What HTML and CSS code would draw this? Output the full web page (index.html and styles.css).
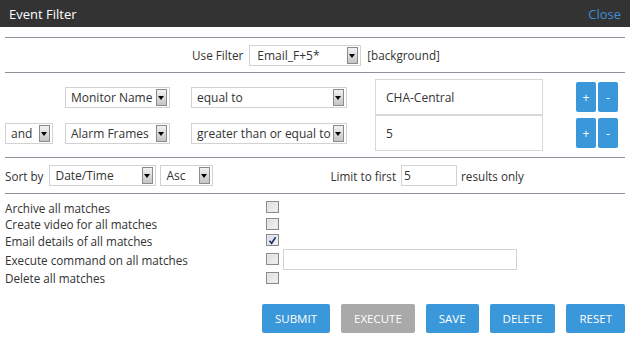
FILE: index.html
```html
<!DOCTYPE html>
<html lang="en">
<head>
    <meta charset="UTF-8">
    <title>Event Filter</title>
    <link rel="stylesheet" href="styles.css">
</head>
<body>
    <div class="dialog">
        <!-- Title bar -->
        <div class="titlebar">
            <span class="title">Event Filter</span>
            <a class="close" href="#">Close</a>
        </div>

        <div class="content">
            <!-- Filter choice -->
            <div class="filter-row">
                <span>Use Filter</span>
                <div class="select w-filter"><span>Email_F+5*</span><i class="arrow"></i></div>
                <span>[background]</span>
            </div>

            <!-- Terms -->
            <div class="terms">
                <div class="term">
                    <div></div>
                    <div class="select w-attr"><span>Monitor Name</span><i class="arrow"></i></div>
                    <div class="select w-op"><span>equal to</span><i class="arrow"></i></div>
                    <div class="value">CHA-Central</div>
                    <div class="term-btns"><button class="small">+</button><button class="small">-</button></div>
                </div>
                <div class="term">
                    <div class="select w-conj"><span>and</span><i class="arrow"></i></div>
                    <div class="select w-attr"><span>Alarm Frames</span><i class="arrow"></i></div>
                    <div class="select w-op"><span>greater than or equal to</span><i class="arrow"></i></div>
                    <div class="value">5</div>
                    <div class="term-btns"><button class="small">+</button><button class="small">-</button></div>
                </div>
            </div>

            <!-- Sorting -->
            <div class="sort-row">
                <div class="sort-left">
                    <span>Sort by</span>
                    <div class="select w-sort"><span>Date/Time</span><i class="arrow"></i></div>
                    <div class="select w-dir"><span>Asc</span><i class="arrow"></i></div>
                </div>
                <div class="limit">
                    <span>Limit to first</span>
                    <div class="text-box w-limit">5</div>
                    <span>results only</span>
                </div>
            </div>

            <!-- Actions -->
            <div class="actions">
                <div class="action"><span class="label">Archive all matches</span><span class="check"></span></div>
                <div class="action"><span class="label">Create video for all matches</span><span class="check"></span></div>
                <div class="action"><span class="label">Email details of all matches</span><span class="check checked"><svg width="11" height="11" viewBox="0 0 11 11"><path d="M2.5 5.8 L4.6 8.3 L8.6 2.2" fill="none" stroke="#23306b" stroke-width="1.6"/></svg></span></div>
                <div class="action tall"><span class="label">Execute command on all matches</span><span class="check"></span><div class="text-box w-cmd"></div></div>
                <div class="action"><span class="label">Delete all matches</span><span class="check"></span></div>
            </div>

            <div class="buttons">
                <button class="btn">SUBMIT</button>
                <button class="btn disabled">EXECUTE</button>
                <button class="btn">SAVE</button>
                <button class="btn">DELETE</button>
                <button class="btn">RESET</button>
            </div>
        </div>
    </div>
</body>
</html>
```

FILE: styles.css
```css
body {
    margin: 0;
    background-color: #fff;
    font-family: 'Open Sans', 'Liberation Sans', sans-serif;
    font-size: 11.7px;
    color: #333;
}

.titlebar {
    height: 27px;
    background-color: #333;
    display: flex;
    justify-content: space-between;
    align-items: center;
    padding: 0 9px 0 9px;
}

.title {
    color: #fff;
    font-size: 13px;
}

.close {
    color: #3f8fd8;
    font-size: 13px;
    text-decoration: none;
}

.content {
    padding: 10px 5px 0 5px;
}

.filter-row {
    border-top: 1px solid #8f8f9c;
    border-bottom: 1px solid #8f8f9c;
    height: 34px;
    display: flex;
    justify-content: center;
    align-items: center;
    gap: 6px;
}

.filter-row span:first-child {
    margin-left: 2px;
}

.select {
    height: 21px;
    box-sizing: border-box;
    border: 1px solid #d2d2d2;
    background-color: #fff;
    display: flex;
    align-items: center;
    justify-content: space-between;
    padding: 0 2px 0 5px;
    white-space: nowrap;
    overflow: hidden;
    font-size: 12px;
}

.arrow {
    width: 9px;
    height: 15px;
    flex-shrink: 0;
    border: 1px solid #8a8a8a;
    background: linear-gradient(#f2f2f2, #c4c4c4);
    position: relative;
}

.arrow::after {
    content: "";
    position: absolute;
    left: 1px;
    top: 6px;
    border-left: 3.5px solid transparent;
    border-right: 3.5px solid transparent;
    border-top: 4px solid #000;
}

.w-filter { width: 112px; }
.w-attr { width: 105px; }
.w-op { width: 156px; }
.w-conj { width: 48px; }
.w-sort { width: 107px; }
.w-dir { width: 53px; }

.terms {
    border-bottom: 1px solid #8f8f9c;
    padding: 6px 0 6px 0;
}

.term {
    display: grid;
    grid-template-columns: 60px 126px 184px 201px auto;
    align-items: center;
    height: 36px;
}

.term .select {
    margin-top: 1px;
}

.value {
    width: 168px;
    height: 36px;
    box-sizing: border-box;
    border: 1px solid #d8d8d8;
    display: flex;
    align-items: center;
    padding-left: 10px;
    font-size: 12px;
}

.term-btns {
    display: flex;
    gap: 2px;
}

button {
    font-family: 'Open Sans', 'Liberation Sans', sans-serif;
    border: none;
    color: #fff;
    background-color: #3a97d9;
    border-radius: 2px;
    cursor: pointer;
}

.small {
    width: 20px;
    height: 30px;
    padding: 0;
    font-size: 12px;
}

.sort-row {
    border-bottom: 1px solid #8f8f9c;
    height: 35px;
    display: flex;
    align-items: center;
}

.sort-left {
    display: flex;
    align-items: center;
    gap: 4px;
}

.sort-left span {
    margin-right: 2px;
}

.limit {
    display: flex;
    align-items: center;
    margin-left: 117px;
    gap: 4px;
}

.text-box {
    height: 21px;
    box-sizing: border-box;
    border: 1px solid #d2d2d2;
    padding-left: 2px;
    font-size: 12px;
    line-height: 19px;
}

.w-limit { width: 56px; margin-left: 1px; }

.actions {
    padding-top: 5px;
    display: flex;
    flex-direction: column;
}

.action {
    display: flex;
    align-items: center;
    height: 16.5px;
}

.action.tall {
    height: 21px;
}

.label {
    width: 261px;
    padding-top: 1px;
}

.check {
    width: 13px;
    height: 12px;
    box-sizing: border-box;
    border: 1px solid #8a8a8a;
    background: linear-gradient(135deg, #dcdcdc, #f4f4f4);
    box-shadow: inset 0 0 0 1px #e8e8e8;
    display: flex;
    align-items: center;
    justify-content: center;
}

.check.checked {
    background: linear-gradient(135deg, #d4d9ea, #f4f5fa);
}

.w-cmd {
    width: 234px;
    margin-left: 4px;
}

.buttons {
    display: flex;
    justify-content: flex-end;
    gap: 11px;
    margin-top: 18px;
}

.btn {
    height: 29px;
    padding: 0 13px;
    font-size: 11.5px;
}

.btn.disabled {
    background-color: #a9a9a9;
}
```
